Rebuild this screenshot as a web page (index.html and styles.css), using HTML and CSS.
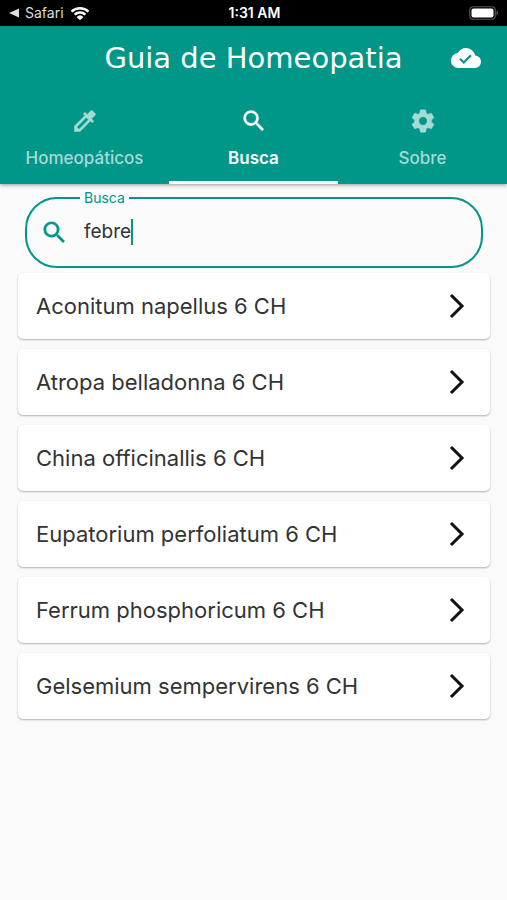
FILE: index.html
```html
<!DOCTYPE html>
<html lang="pt-BR">
<head>
<meta charset="utf-8">
<meta name="viewport" content="width=device-width, initial-scale=1">
<title>Guia de Homeopatia</title>
<link rel="stylesheet" href="styles.css">
</head>
<body>
<svg class="defs" aria-hidden="true">
  <symbol id="search" viewBox="0 0 24 24"><path d="M15.5 14h-.79l-.28-.27A6.47 6.47 0 0 0 16 9.5 6.5 6.5 0 1 0 9.5 16c1.61 0 3.09-.59 4.23-1.57l.27.28v.79l5 4.99L20.49 19l-4.99-5zm-6 0C7.01 14 5 11.99 5 9.5S7.01 5 9.5 5 14 7.01 14 9.5 11.99 14 9.5 14z" stroke="currentColor" stroke-width=".3"/></symbol>
  <symbol id="chevron" viewBox="0 0 16 26"><path d="M2 2l11 11L2 24" fill="none" stroke="currentColor" stroke-width="3"/></symbol>
</svg>
<div class="status">
  <div class="status-left">
    <svg width="10" height="10" viewBox="0 0 10 10"><path d="M0 5l10-4.500v9z"/></svg>
    <span>Safari</span>
    <svg class="wifi" width="20" height="15" viewBox="0 0 20 15"><path d="M1.500 5.600a12.500 12.500 0 0 1 17 0M4.600 8.700a8 8 0 0 1 10.800 0" fill="none" stroke="currentColor" stroke-width="2.500"/><path d="M6.600 10.900a5 5 0 0 1 6.800 0L10 14.300z"/></svg>
  </div>
  <time class="clock">1:31 AM</time>
  <div class="status-right">
    <svg width="31" height="14" viewBox="0 0 31 14"><rect x=".75" y=".75" width="25.500" height="12.500" rx="3.500" fill="none" stroke="#555" stroke-width="1.200"/><rect x="2.500" y="2.500" width="22" height="9" rx="2"/><path d="M27.500 4.500c2 .8 2 4.200 0 5z" fill="#555"/></svg>
  </div>
</div>
<header class="header">
  <div class="appbar">
    <h1>Guia de Homeopatia</h1>
    <button class="cloud" type="button" aria-label="Sincronizado">
      <svg width="30" height="30" viewBox="0 0 24 24"><path d="M19.350 10.040A7.490 7.490 0 0 0 12 4C9.110 4 6.600 5.640 5.350 8.040A5.994 5.994 0 0 0 0 14c0 3.310 2.690 6 6 6h13c2.760 0 5-2.240 5-5 0-2.640-2.050-4.780-4.650-4.960z"/><path d="M7.200 12.600l3 3 5.800-5.800" fill="none" stroke="#009688" stroke-width="1.700"/></svg>
    </button>
  </div>
  <nav class="tabs">
    <a class="tab" href="#homeopaticos">
      <svg width="28" height="28" viewBox="0 0 24 24"><path d="M20.710 5.630l-2.340-2.340a1 1 0 0 0-1.410 0l-3.120 3.120-1.930-1.910-1.410 1.410 1.420 1.420L3 16.250V21h4.750l8.920-8.920 1.420 1.420 1.410-1.410-1.920-1.920 3.120-3.120c.4-.4.4-1.030.01-1.420zM6.920 19L5 17.080l8.060-8.060 1.920 1.920L6.920 19z" stroke="currentColor" stroke-width=".4"/></svg>
      <span>Homeopáticos</span>
    </a>
    <a class="tab active" href="#busca" aria-current="page">
      <svg width="28" height="28"><use href="#search"/></svg>
      <span>Busca</span>
    </a>
    <a class="tab" href="#sobre">
      <svg width="28" height="28" viewBox="0 0 24 24"><path d="M19.140 12.940c.04-.3.060-.61.060-.94 0-.32-.02-.64-.07-.94l2.030-1.580a.49.49 0 0 0 .12-.61l-1.920-3.320a.488.488 0 0 0-.59-.22l-2.390.96c-.5-.38-1.030-.7-1.620-.94l-.36-2.540a.484.484 0 0 0-.48-.41h-3.840c-.24 0-.43.17-.47.41l-.36 2.540c-.59.24-1.130.57-1.620.94l-2.390-.96c-.22-.08-.47 0-.59.22L2.740 8.870c-.12.21-.08.47.12.61l2.030 1.580c-.05.3-.09.63-.09.94s.02.64.07.94l-2.030 1.580a.49.49 0 0 0-.12.61l1.920 3.320c.12.22.37.29.59.22l2.390-.96c.5.38 1.030.7 1.620.94l.36 2.540c.05.24.24.41.48.41h3.840c.24 0 .44-.17.47-.41l.36-2.540c.59-.24 1.130-.56 1.620-.94l2.390.96c.22.08.47 0 .59-.22l1.920-3.320c.12-.22.07-.47-.12-.61l-2.010-1.580zM12 15.600A3.600 3.600 0 1 1 12 8.400a3.600 3.600 0 0 1 0 7.200z" stroke="currentColor" stroke-width=".4"/></svg>
      <span>Sobre</span>
    </a>
  </nav>
</header>
<main>
  <fieldset class="field">
    <legend><label for="q">Busca</label></legend>
    <div class="entry">
      <svg width="29" height="29"><use href="#search"/></svg>
      <input id="q" type="text" value="febre" autocomplete="off" spellcheck="false">
      <span class="caret"></span>
    </div>
  </fieldset>
  <ul class="results">
    <li><a href="#1"><span>Aconitum napellus 6 CH</span><svg width="16" height="26"><use href="#chevron"/></svg></a></li>
    <li><a href="#2"><span>Atropa belladonna 6 CH</span><svg width="16" height="26"><use href="#chevron"/></svg></a></li>
    <li><a href="#3"><span>China officinallis 6 CH</span><svg width="16" height="26"><use href="#chevron"/></svg></a></li>
    <li><a href="#4"><span>Eupatorium perfoliatum 6 CH</span><svg width="16" height="26"><use href="#chevron"/></svg></a></li>
    <li><a href="#5"><span>Ferrum phosphoricum 6 CH</span><svg width="16" height="26"><use href="#chevron"/></svg></a></li>
    <li><a href="#6"><span>Gelsemium sempervirens 6 CH</span><svg width="16" height="26"><use href="#chevron"/></svg></a></li>
  </ul>
</main>
</body>
</html>
```
FILE: styles.css
```css
* { box-sizing: border-box; }
body {
  margin: 0;
  min-height: 100vh;
  background: #fafafa;
  color: #333;
  font-family: Inter, "Liberation Sans", sans-serif;
}
svg { display: block; flex: none; fill: currentColor; }
a { color: inherit; text-decoration: none; }
.defs { position: absolute; width: 0; height: 0; }

.status {
  display: grid;
  grid-template-columns: 1fr auto 1fr;
  align-items: center;
  height: 26px;
  padding: 0 7px 0 9px;
  background: #000;
  color: #fff;
  font-size: 14px;
  line-height: 20px;
}
.status-left { display: flex; align-items: center; gap: 6px; color: #ddd; }
.wifi { color: #fff; }
.clock { font-weight: 600; }
.status-right { display: flex; justify-content: flex-end; }

.header {
  background: #009688;
  color: #fff;
  box-shadow: 0 1px 4px rgba(0, 0, 0, .4);
}
.appbar {
  display: grid;
  grid-template-columns: 1fr auto 1fr;
  align-items: center;
  height: 64px;
  padding: 0 26px;
}
.appbar h1 {
  grid-column: 2;
  margin: 0;
  font: 400 29px/36px "DejaVu Sans", sans-serif;
}
.cloud {
  justify-self: end;
  padding: 0;
  border: 0;
  background: none;
  color: #fff;
}
.tabs { display: grid; grid-template-columns: repeat(3, 1fr); }
.tab {
  display: flex;
  flex-direction: column;
  align-items: center;
  gap: 13px;
  height: 94px;
  padding-top: 17px;
  border-bottom: 3px solid transparent;
  color: #a6dad5;
  font-size: 17px;
  font-weight: 500;
  line-height: 20px;
}
.tab.active { border-color: #fff; color: #fff; font-weight: 600; }

main { padding: 5px 17px 24px 18px; }
.field {
  min-width: 0;
  height: 79px;
  margin: 0 7px;
  padding: 0 13px;
  border: 2px solid #009688;
  border-radius: 32px;
  color: #009688;
}
.field legend {
  margin-left: 40px;
  padding: 0 4px;
  font-size: 14px;
  line-height: 18px;
}
.entry {
  display: flex;
  align-items: center;
  height: 36px;
  margin-top: 7px;
}
.entry input {
  field-sizing: content;
  margin-left: 15px;
  padding: 0;
  border: 0;
  outline: 0;
  background: none;
  color: #333;
  font: 400 19px/26px Inter, "Liberation Sans", sans-serif;
}
.caret { width: 2px; height: 26px; background: #009688; }

.results {
  display: grid;
  gap: 10px;
  margin: 5px 0 0;
  padding: 0;
  list-style: none;
}
.results a {
  display: flex;
  align-items: center;
  justify-content: space-between;
  height: 66px;
  padding: 0 25px 0 18px;
  border-radius: 5px;
  background: #fff;
  box-shadow: 0 1px 2px rgba(0, 0, 0, .3);
  font-size: 22px;
  line-height: 28px;
}
.results svg { color: #111; }
```
